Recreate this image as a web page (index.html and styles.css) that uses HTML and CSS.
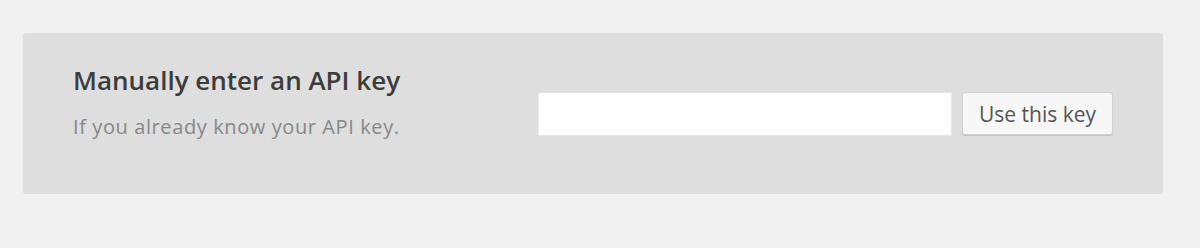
FILE: index.html
```html
<!DOCTYPE html>
<html>
<head>
<meta charset="utf-8">
<link rel="stylesheet" href="styles.css">
</head>
<body>
<div class="panel">
  <div class="info">
    <h2 class="title">Manually enter an API key</h2>
    <p class="desc">If you already know your API key.</p>
  </div>
  <form class="form">
    <input class="key-input" type="text">
    <button class="btn" type="button">Use this key</button>
  </form>
</div>
</body>
</html>
```
FILE: styles.css
```css
html, body {
  margin: 0;
  padding: 0;
  background: #f1f1f1;
  font-family: "Open Sans", sans-serif;
}
body {
  padding: 33px 37px 0 23px;
}
.panel {
  background: #dedede;
  border-radius: 3px;
  height: 161px;
  box-sizing: border-box;
  display: flex;
  padding: 0 50px;
}
.info {
  width: 465px;
  padding-top: 32px;
}
.title {
  margin: 0;
  font-size: 26px;
  font-weight: 600;
  color: #3c3c3c;
  line-height: 30px;
}
.desc {
  margin: 20px 0 0;
  font-size: 20px;
  color: #888;
  line-height: 24px;
  letter-spacing: 0.6px;
}
.form {
  display: flex;
  align-items: flex-start;
  padding-top: 59px;
  gap: 10px;
}
.key-input {
  width: 414px;
  height: 44px;
  box-sizing: border-box;
  border: 1px solid #e6e6e6;
  background: #fff;
  margin: 0;
  padding: 0 8px;
}
.btn {
  width: 151px;
  height: 43px;
  box-sizing: border-box;
  border: 1px solid #d0d0d0;
  border-radius: 3px;
  background: #f7f7f7;
  box-shadow: 0 1px 0 #c4c4c4;
  color: #555;
  font-family: "Open Sans", sans-serif;
  font-size: 21px;
  padding: 0;
  margin: 0;
}
```
